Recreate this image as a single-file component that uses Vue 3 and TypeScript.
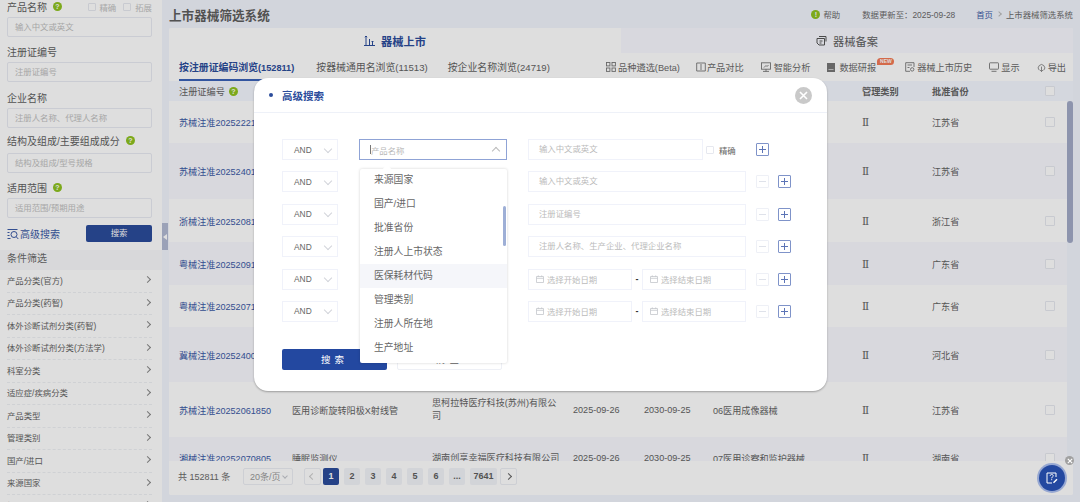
<script setup lang="ts">
interface Row {
  code: string;
  h: number;
  name?: string;
  company?: string;
  start?: string;
  end?: string;
  category?: string;
  province: string;
}

const sideFilters = [
  "产品分类(官方)",
  "产品分类(药智)",
  "体外诊断试剂分类(药智)",
  "体外诊断试剂分类(方法学)",
  "科室分类",
  "适应症/疾病分类",
  "产品类型",
  "管理类别",
  "国产/进口",
  "来源国家",
  "批准省份",
];

const rows: Row[] = [
  { code: "苏械注准20252221850", h: 42, province: "江苏省" },
  { code: "苏械注准20252401127", h: 56, province: "江苏省" },
  { code: "浙械注准20252081436", h: 43, province: "浙江省" },
  { code: "粤械注准20252091302", h: 43, province: "广东省" },
  { code: "粤械注准20252071655", h: 42, province: "广东省" },
  { code: "冀械注准20252400218", h: 55, province: "河北省" },
  {
    code: "苏械注准20252061850",
    h: 55,
    name: "医用诊断旋转阳极X射线管",
    company: "思柯拉特医疗科技(苏州)有限公司",
    start: "2025-09-26",
    end: "2030-09-25",
    category: "06医用成像器械",
    province: "江苏省",
  },
  {
    code: "湘械注准20252070805",
    h: 42,
    name: "睡眠监测仪",
    company: "湖南创享幸福医疗科技有限公司",
    start: "2025-09-26",
    end: "2030-09-25",
    category: "07医用诊察和监护器械",
    province: "湖南省",
  },
];

const options = ["来源国家", "国产/进口", "批准省份", "注册人上市状态", "医保耗材代码", "管理类别", "注册人所在地", "生产地址"];
const pages = ["2", "3", "4", "5", "6", "..."];
</script>

<template>
  <div class="page">
    <aside class="side">
      <div class="form">
        <div class="label-row">
          <span class="label">产品名称</span>
          <span class="hint">?</span>
          <span class="checks">
            <i class="box"></i>精确
            <i class="box"></i>拓展
          </span>
        </div>
        <div class="field">输入中文或英文</div>
        <div class="label-row gap1"><span class="label">注册证编号</span></div>
        <div class="field">注册证编号</div>
        <div class="label-row gap2"><span class="label">企业名称</span></div>
        <div class="field">注册人名称、代理人名称</div>
        <div class="label-row gap3">
          <span class="label">结构及组成/主要组成成分</span>
          <span class="hint">?</span>
        </div>
        <div class="field">结构及组成/型号规格</div>
        <div class="label-row gap1">
          <span class="label">适用范围</span>
          <span class="hint">?</span>
        </div>
        <div class="field">适用范围/预期用途</div>
        <div class="search-row">
          <span class="adv">
            <svg width="12" height="12" viewBox="0 0 12 12" fill="none" stroke="#3b5aa6" stroke-width="1">
              <path d="M.5 1.5h10M.5 4.5h2M.5 7.5h2M.5 10.5h3" />
              <circle cx="7" cy="6.5" r="3" />
              <path d="M9.2 8.7 11.3 11" />
            </svg>
            高级搜索
          </span>
          <span class="side-btn">搜索</span>
        </div>
      </div>
      <div class="cond-head">条件筛选</div>
      <div v-for="item in sideFilters" :key="item" class="cond">
        <span>{{ item }}</span>
        <i class="chev-right"></i>
      </div>
    </aside>

    <main class="main">
      <div class="handle"><i></i></div>
      <header class="top">
        <h1>上市器械筛选系统</h1>
        <div class="top-right">
          <span class="help"><span class="hint solid">!</span>帮助</span>
          <span class="updated">数据更新至：2025-09-28</span>
          <span class="crumbs"><b>首页</b><i class="chev-right small"></i>上市器械筛选系统</span>
        </div>
      </header>

      <section class="panel">
        <div class="tabs">
          <div class="tab active">
            <svg width="11" height="11" viewBox="0 0 11 11" fill="none" stroke="#2b4c9b" stroke-width="1">
              <path d="M0 10.5h11M2 10V1M.8 2.2 2 1l1.2 1.2M5.5 10V4M8.5 10V6M7.6 7 8.5 6l.9 1" />
            </svg>
            器械上市
          </div>
          <div class="tab">
            <svg width="11" height="11" viewBox="0 0 11 11" fill="none" stroke="#555" stroke-width="1">
              <path d="M3 1.5h7v5M1 3.5h7.5v6.5H3L1 8z" />
              <path d="M3.5 6h3M3.5 8h2" />
            </svg>
            器械备案
          </div>
        </div>

        <div class="subbar">
          <span class="sub on">按注册证编码浏览<em>(152811)</em></span>
          <span class="sub">按器械通用名浏览<em>(11513)</em></span>
          <span class="sub">按企业名称浏览<em>(24719)</em></span>
          <div class="tools">
            <span class="tool t1">
              <svg width="10" height="10" viewBox="0 0 10 10" fill="none" stroke="#777" stroke-width=".9">
                <rect x=".5" y=".5" width="3.4" height="3.4" />
                <rect x="6" y=".5" width="3.4" height="3.4" />
                <rect x=".5" y="6" width="3.4" height="3.4" />
                <rect x="6" y="6" width="3.4" height="3.4" />
              </svg>
              品种遴选(Beta)
            </span>
            <span class="tool t2">
              <svg width="10" height="10" viewBox="0 0 10 10" fill="none" stroke="#777" stroke-width=".9">
                <path d="M4 1H.7v8H4M6 1h3.300v8H6M5 0v10" />
              </svg>
              产品对比
            </span>
            <span class="tool t3">
              <svg width="10" height="10" viewBox="0 0 10 10" fill="none" stroke="#777" stroke-width=".9">
                <rect x=".5" y=".8" width="9" height="6.4" />
                <path d="M2 9.4h6M5 7.2v2.2M3 5.5l2-2 1 1 1.5-1.5" />
              </svg>
              智能分析
            </span>
            <span class="tool t4">
              <svg width="8" height="9" viewBox="0 0 8 9">
                <path fill="#777" d="M0 0h8v9H0z" />
                <path stroke="#ddd" stroke-width=".8" d="M1.500 6.500h5" />
              </svg>
              数据研报
              <b class="new">NEW</b>
            </span>
            <span class="tool t5">
              <svg width="10" height="10" viewBox="0 0 10 10" fill="none" stroke="#777" stroke-width=".9">
                <path d="M9 5V.7H.7v8.600H5M2.500 3h4.500M2.500 5.500h2" />
                <circle cx="7.200" cy="7.400" r="1.700" />
              </svg>
              器械上市历史
            </span>
            <span class="tool t6">
              <svg width="10" height="10" viewBox="0 0 10 10" fill="none" stroke="#777" stroke-width=".9">
                <rect x=".5" y=".8" width="9" height="6.4" rx=".6" />
                <path d="M2.500 9.300h5" />
              </svg>
              显示
            </span>
            <span class="tool t7">
              <svg width="9" height="9" viewBox="0 0 10 10" fill="none" stroke="#777" stroke-width=".9">
                <path d="M2.500 8A3.600 3.600 0 1 1 7.500 8" />
                <path d="M5 4v5.500M3.300 7.800 5 9.500l1.700-1.700" />
              </svg>
              导出
            </span>
          </div>
        </div>

        <div class="grid head">
          <span class="head-first">注册证编号<span class="hint">?</span></span>
          <span></span><span></span><span></span><span></span><span></span>
          <span>管理类别</span>
          <span>批准省份</span>
          <i class="box"></i>
        </div>

        <div class="body">
          <div class="rows">
            <div v-for="(row, i) in rows" :key="row.code" class="grid row" :class="{ alt: i % 2 === 1 }" :style="{ height: row.h + 'px' }">
              <a>{{ row.code }}</a>
              <span>{{ row.name }}</span>
              <span class="company">{{ row.company }}</span>
              <span>{{ row.start }}</span>
              <span>{{ row.end }}</span>
              <span>{{ row.category }}</span>
              <span class="roman">Ⅱ</span>
              <span class="prov">{{ row.province }}</span>
              <i class="box"></i>
            </div>
          </div>
          <div class="track"><div class="thumb"></div></div>
        </div>

        <footer class="pager">
          <span class="total">共 152811 条</span>
          <span class="size">20条/页<i class="chev-down"></i></span>
          <span class="pg nav dim"><i class="chev-left"></i></span>
          <span class="pg cur">1</span>
          <span v-for="p in pages" :key="p" class="pg">{{ p }}</span>
          <span class="pg wide">7641</span>
          <span class="pg nav"><i class="chev-right"></i></span>
        </footer>
      </section>
    </main>

    <div class="mask">
      <div class="modal">
        <div class="modal-head">
          <i class="dot"></i>
          <span class="modal-title">高级搜索</span>
          <span class="close">
            <svg width="9" height="9" viewBox="0 0 9 9" stroke="#fff" stroke-width="1.6"><path d="M1 1l7 7M8 1 1 8" /></svg>
          </span>
        </div>

        <div class="modal-body">
          <div class="q-row">
            <div class="q-and">AND<i class="chev-down big"></i></div>
            <div class="q-col q-focus">
              <i class="cursor"></i>产品名称
              <i class="chev-up"></i>
            </div>
            <div class="q-input narrow">输入中文或英文</div>
            <i class="box q-box"></i><span class="exact">精确</span>
            <span class="sq plus first"></span>
          </div>

          <div class="q-row">
            <div class="q-and">AND<i class="chev-down big"></i></div>
            <div class="q-col"></div>
            <div class="q-input">输入中文或英文</div>
            <span class="sq minus"></span><span class="sq plus"></span>
          </div>
          <div class="q-row">
            <div class="q-and">AND<i class="chev-down big"></i></div>
            <div class="q-col"></div>
            <div class="q-input">注册证编号</div>
            <span class="sq minus"></span><span class="sq plus"></span>
          </div>
          <div class="q-row">
            <div class="q-and">AND<i class="chev-down big"></i></div>
            <div class="q-col"></div>
            <div class="q-input">注册人名称、生产企业、代理企业名称</div>
            <span class="sq minus"></span><span class="sq plus"></span>
          </div>
          <div v-for="n in 2" :key="n" class="q-row">
            <div class="q-and">AND<i class="chev-down big"></i></div>
            <div class="q-col"></div>
            <div class="q-dates">
              <div class="q-date">
                <svg width="8" height="8" viewBox="0 0 8 8" fill="none" stroke="#c4c6cc" stroke-width=".8"><path d="M.5 1.500h7v6h-7zM.5 3.300h7M2.300 .4v1.500M5.700 .4v1.500" /></svg>
                选择开始日期
              </div>
              <span class="dash">-</span>
              <div class="q-date">
                <svg width="8" height="8" viewBox="0 0 8 8" fill="none" stroke="#c4c6cc" stroke-width=".8"><path d="M.5 1.500h7v6h-7zM.5 3.300h7M2.300 .4v1.500M5.700 .4v1.500" /></svg>
                选择结束日期
              </div>
            </div>
            <span class="sq minus"></span><span class="sq plus"></span>
          </div>

          <div class="actions">
            <span class="btn-search">搜索</span>
            <span class="btn-reset">清空</span>
          </div>

          <div class="drop">
            <i class="drop-arrow"></i>
            <div class="drop-list">
              <div v-for="(o, i) in options" :key="o" class="opt" :class="{ hover: i === 4 }">{{ o }}</div>
            </div>
            <i class="drop-thumb"></i>
          </div>
        </div>
      </div>

      <div class="float-close">
        <svg width="6" height="6" viewBox="0 0 6 6" stroke="#fff" stroke-width="1.1"><path d="M.8.8l4.400 4.400M5.200.8.8 5.200" /></svg>
      </div>
    </div>

    <div class="float">
      <svg width="12" height="12" viewBox="0 0 12 12" fill="none" stroke="#fff" stroke-width="1">
        <path d="M10 5V1H1v10h5" />
        <path d="M4.200 3.900c0-2 3-2 3 0 0 1.100-1.500 1.100-1.500 2.400M5.700 7.200v1" />
        <path d="M7.500 10.800 11 7.200" stroke-width="1.400" />
      </svg>
    </div>
  </div>
</template>

<style>
html,
body {
  margin: 0;
  overflow: hidden;
}
</style>

<style scoped>
.page {
  display: flex;
  width: 1080px;
  height: 502px;
  overflow: hidden;
  position: relative;
  background: #f2f5fd;
  color: #555;
  font-family: "Liberation Sans", "Noto Sans CJK SC", sans-serif;
}

i {
  font-style: normal;
}

.side {
  width: 162px;
  flex: none;
  background: #fff;
}

.form {
  padding: 0 10px 0 7px;
  height: 250px;
  box-sizing: border-box;
}

.label-row {
  display: flex;
  align-items: center;
  height: 13px;
  margin-bottom: 4px;
}

.gap1 {
  margin-top: 8px;
}

.gap2 {
  margin-top: 9px;
}

.gap3 {
  margin-top: 6px;
  margin-bottom: 6px;
}

.label {
  font-size: 10px;
  color: #5f5f5f;
}

.hint {
  display: inline-flex;
  align-items: center;
  justify-content: center;
  width: 9px;
  height: 9px;
  margin-left: 6px;
  border-radius: 50%;
  background: #8fc31f;
  color: #fff;
  font-size: 7px;
  font-weight: 700;
  line-height: 1;
}

.checks {
  margin-left: auto;
  display: flex;
  align-items: center;
  font-size: 8.4px;
  color: #c2c2c2;
  white-space: nowrap;
}

.box {
  display: inline-block;
  flex: none;
  width: 8px;
  height: 8px;
  box-sizing: border-box;
  border: 1px solid #e6e8ef;
  border-radius: 1px;
  background: #fff;
}

.checks .box {
  margin: 0 4px 0 0;
}

.checks .box:nth-of-type(2) {
  margin-left: 7px;
}

.field {
  height: 20px;
  line-height: 18px;
  box-sizing: border-box;
  border: 1px solid #e9ebf3;
  border-radius: 2px;
  padding-left: 7px;
  font-size: 8.4px;
  color: #c0c0c0;
}

.search-row {
  display: flex;
  justify-content: space-between;
  align-items: center;
  margin-top: 7px;
}

.adv {
  display: flex;
  align-items: center;
  gap: 1px;
  font-size: 10px;
  color: #3b5aa6;
}

.side-btn {
  width: 66px;
  height: 17px;
  line-height: 17px;
  text-align: center;
  border-radius: 2px;
  background: #2b4c9b;
  color: #fff;
  font-size: 8.4px;
}

.cond-head {
  height: 20px;
  line-height: 18px;
  padding-left: 7px;
  background: #f8f9fb;
  font-size: 10px;
  color: #6a6a6a;
}

.cond {
  display: flex;
  align-items: center;
  justify-content: space-between;
  height: 22.5px;
  padding-bottom: 2px;
  margin: 0 10px 0 7px;
  box-sizing: border-box;
  border-bottom: 1px dashed #eef0f4;
  font-size: 8.4px;
  color: #636363;
}

.chev-right,
.chev-left,
.chev-down,
.chev-up {
  display: inline-block;
  flex: none;
  width: 5px;
  height: 5px;
  box-sizing: border-box;
  border-right: 1px solid #888;
  border-bottom: 1px solid #888;
}

.chev-right {
  transform: rotate(-45deg);
  margin-right: 2px;
}

.chev-right.small {
  width: 4px;
  height: 4px;
  margin: 0 5px 1px 4px;
  border-color: #bbb;
}

.chev-left {
  transform: rotate(135deg);
}

.chev-down {
  transform: rotate(45deg);
  border-color: #c4c6cc;
}

.chev-down.big {
  width: 6px;
  height: 6px;
  border-color: #d2d4da;
  margin-left: auto;
  margin-bottom: 2px;
}

.chev-up {
  width: 6px;
  height: 6px;
  margin-left: auto;
  margin-top: 3px;
  transform: rotate(-135deg);
  border-color: #bbb;
}

.main {
  flex: 1;
  min-width: 0;
  padding: 0 7px;
  position: relative;
  display: flex;
  flex-direction: column;
}

.handle {
  position: absolute;
  left: 0;
  top: 223px;
  width: 6px;
  height: 27px;
  background: #b3bbd4;
  display: flex;
  align-items: center;
  justify-content: center;
}

.handle i {
  border-style: solid;
  border-width: 3.5px 4px 3.5px 0;
  border-color: transparent #fff transparent transparent;
}

.top {
  height: 28px;
  flex: none;
  display: flex;
  align-items: center;
  justify-content: space-between;
}

h1 {
  margin: 0;
  font-size: 12.6px;
  font-weight: 700;
  color: #5f5f5f;
}

.top-right {
  display: flex;
  align-items: center;
  font-size: 8.4px;
  color: #6a6a6a;
}

.help {
  display: flex;
  align-items: center;
}

.hint.solid {
  margin: 0 3px 0 0;
}

.updated {
  margin-left: 22px;
}

.crumbs {
  display: flex;
  align-items: center;
  margin-left: 21px;
}

.crumbs b {
  font-weight: 400;
  color: #3b5aa6;
}

.panel {
  height: 467px;
  flex: none;
  background: #fff;
  border-radius: 2px;
  display: flex;
  flex-direction: column;
  overflow: hidden;
}

.tabs {
  display: flex;
  height: 25px;
  flex: none;
  background: #f8f9ff;
}

.tab {
  width: 452px;
  display: flex;
  align-items: center;
  justify-content: center;
  gap: 6px;
  font-size: 11.2px;
  color: #5f5f5f;
}

.tab.active {
  background: #fff;
  color: #2b4c9b;
  font-weight: 700;
}

.subbar {
  height: 28px;
  flex: none;
  display: flex;
  align-items: center;
  padding-left: 10px;
  position: relative;
}

.sub {
  height: 28px;
  line-height: 29px;
  margin-right: 20px;
  font-size: 9.9px;
  color: #636363;
  box-sizing: border-box;
  white-space: nowrap;
}

.sub em {
  font-style: normal;
  font-size: 9.6px;
}

.sub.on {
  margin-right: 22px;
  color: #2b4c9b;
  font-weight: 700;
  border-bottom: 2px solid #3a62b8;
}

.sub.on em {
  font-size: 9.2px;
}

.tools {
  flex: 1;
  display: flex;
  align-items: center;
  justify-content: flex-end;
  font-size: 9.2px;
  color: #6a6a6a;
}

.tool {
  display: flex;
  align-items: center;
  gap: 2px;
  white-space: nowrap;
  position: relative;
  margin-left: 17px;
}

.tools .t2 {
  margin-left: 16px;
  gap: 1px;
}

.tools .t3 {
  gap: 3px;
}

.tools .t4 {
  gap: 4px;
}

.tools .t5 {
  margin-left: 29px;
}

.tools .t7 {
  margin-right: 7px;
}

.new {
  position: absolute;
  left: 50px;
  top: -2px;
  width: 17px;
  height: 7px;
  line-height: 7px;
  text-align: center;
  border-radius: 4px 4px 4px 0;
  background: #f47a55;
  color: #fff;
  font-size: 5px;
  font-weight: 700;
}

.grid {
  display: grid;
  grid-template-columns: 113px 140px 141px 71px 69px 149px 70px 113px 1fr;
  align-items: center;
  padding-left: 10px;
  font-size: 9.1px;
  color: #636363;
}

.head {
  height: 20px;
  flex: none;
  background: #f4f7ff;
  font-weight: 700;
  font-size: 9.2px;
}

.head .box,
.row .box {
  width: 10px;
  height: 10px;
}

.head-first {
  display: flex;
  align-items: center;
  font-weight: 400;
}

.head-first .hint {
  margin-left: 4px;
}

.body {
  flex: 1;
  min-height: 0;
  display: flex;
  overflow: hidden;
  background: #f2f5fd;
}

.rows {
  flex: 1;
  min-width: 0;
}

.row {
  background: #fff;
}

.row.alt {
  background: #f8f9fe;
}

.row a {
  color: #3b5aa6;
  white-space: nowrap;
}

.company {
  padding-right: 11px;
  line-height: 13px;
}

.roman {
  font-family: "DejaVu Serif", serif;
  font-size: 10.5px;
}

.track {
  width: 6px;
  flex: none;
}

.thumb {
  height: 142px;
  border-radius: 3px;
  background: #a3abc7;
}

.pager {
  height: 34px;
  flex: none;
  display: flex;
  align-items: center;
  padding: 0 0 3px 9px;
  box-sizing: border-box;
  background: #fff;
  font-size: 9px;
  color: #6a6a6a;
}

.total {
  width: 65px;
  flex: none;
  white-space: nowrap;
}

.size {
  width: 50px;
  height: 17px;
  box-sizing: border-box;
  border: 1px solid #eceef4;
  border-radius: 2px;
  display: flex;
  align-items: center;
  padding-left: 6px;
  margin-right: 11px;
  color: #999;
}

.size i {
  width: 4px;
  height: 4px;
  margin-left: 2px;
  margin-bottom: 2px;
}

.pg {
  width: 16px;
  height: 17px;
  line-height: 17px;
  margin-right: 5px;
  text-align: center;
  border-radius: 2px;
  background: #f2f4f9;
  font-weight: 700;
  color: #5f5f5f;
}

.pg.nav {
  width: 17px;
  box-sizing: border-box;
  border: 1px solid #eceef4;
  background: #fff;
  display: flex;
  align-items: center;
  justify-content: center;
  margin-right: 2px;
}

.pg.nav:last-child {
  margin-left: -2px;
}

.pg.nav .chev-right {
  margin: 0;
  border-color: #666;
}

.pg.nav.dim .chev-left {
  border-color: #ccc;
}

.pg.cur {
  background: #2b4c9b;
  color: #fff;
}

.pg.wide {
  width: 27px;
}

.mask {
  position: absolute;
  inset: 0;
  background: rgba(0, 0, 0, 0.13);
  display: flex;
  justify-content: center;
  align-items: flex-start;
  padding-top: 78px;
}

.modal {
  width: 573px;
  height: 313px;
  margin-left: 1px;
  background: #fff;
  border-radius: 14px;
  box-shadow: 0 1px 2px rgba(0, 0, 0, 0.3);
}

.modal-head {
  height: 34px;
  display: flex;
  align-items: center;
  padding: 0 15px;
  border-bottom: 1px solid #eef1f8;
}

.dot {
  width: 4px;
  height: 4px;
  border-radius: 50%;
  background: #2b4c9b;
  margin-right: 9px;
}

.modal-title {
  font-size: 10.5px;
  font-weight: 700;
  color: #2b4c9b;
}

.close {
  width: 17px;
  height: 17px;
  margin-left: auto;
  border-radius: 50%;
  background: #c9c9c9;
  display: flex;
  align-items: center;
  justify-content: center;
}

.modal-body {
  position: relative;
  padding: 26px 0 0 28px;
  display: flex;
  flex-direction: column;
  gap: 11.4px;
}

.q-row {
  display: flex;
  align-items: center;
  height: 21px;
}

.q-and {
  width: 56px;
  height: 21px;
  box-sizing: border-box;
  display: flex;
  align-items: center;
  padding: 0 6px 0 11px;
  border: 1px solid #f0f2fa;
  font-size: 8.4px;
  color: #666;
}

.q-col {
  width: 148px;
  height: 21px;
  margin: 0 21px;
  box-sizing: border-box;
}

.q-focus {
  display: flex;
  align-items: center;
  padding: 0 7px 0 10px;
  border: 1px solid #8fa3d6;
  font-size: 8.4px;
  color: #b9b9b9;
}

.cursor {
  width: 1px;
  height: 9px;
  background: #777;
}

.q-input {
  width: 218px;
  height: 21px;
  line-height: 19px;
  box-sizing: border-box;
  padding-left: 10px;
  border: 1px solid #f0f2fa;
  font-size: 8.4px;
  color: #bbb;
}

.q-input.narrow {
  width: 175px;
}

.q-box {
  margin-left: 3px;
}

.exact {
  margin-left: 5px;
  font-size: 8.4px;
  color: #666;
}

.q-dates {
  width: 218px;
  display: flex;
  align-items: center;
  justify-content: space-between;
}

.q-date {
  width: 104px;
  height: 21px;
  box-sizing: border-box;
  display: flex;
  align-items: center;
  gap: 3px;
  padding-left: 7px;
  border: 1px solid #f0f2fa;
  font-size: 8.4px;
  color: #bbb;
}

.dash {
  font-size: 9px;
  font-weight: 700;
  color: #333;
}

.sq {
  position: relative;
  width: 13px;
  height: 13px;
  box-sizing: border-box;
  border: 1px solid #7f93c9;
  border-radius: 1px;
  margin-left: 9px;
}

.sq.minus {
  margin-left: 10px;
  border-color: #eef0f6;
}

.sq.first {
  margin-left: 20px;
}

.sq::before {
  content: "";
  position: absolute;
  left: 2px;
  right: 2px;
  top: 5px;
  height: 1px;
  background: #5c74b6;
}

.sq.minus::before {
  background: #dfe2ea;
}

.sq.plus::after {
  content: "";
  position: absolute;
  top: 2px;
  bottom: 2px;
  left: 5px;
  width: 1px;
  background: #5c74b6;
}

.actions {
  display: flex;
  gap: 10px;
  margin-top: 15.6px;
}

.btn-search,
.btn-reset {
  width: 105px;
  height: 21px;
  line-height: 21px;
  box-sizing: border-box;
  text-align: center;
  border-radius: 2px;
  font-size: 9.5px;
  letter-spacing: 4px;
}

.btn-search {
  background: #2348a0;
  color: #fff;
}

.btn-reset {
  line-height: 19px;
  border: 1px solid #eef0f6;
  color: #666;
}

.drop {
  position: absolute;
  left: 106px;
  top: 56px;
  width: 147px;
  height: 194px;
  background: #fff;
  border-radius: 2px;
  box-shadow: 0 0 3px rgba(0, 0, 0, 0.18);
}

.drop-arrow {
  position: absolute;
  left: 24px;
  top: -3px;
  width: 6px;
  height: 6px;
  background: #fff;
  transform: rotate(45deg);
}

.drop-list {
  position: relative;
  height: 194px;
  overflow: hidden;
}

.opt {
  height: 24px;
  line-height: 24px;
  padding-left: 14px;
  font-size: 9.8px;
  color: #666;
}

.opt:first-child {
  margin-top: -1px;
}

.opt.hover {
  background: #f5f6fa;
}

.drop-thumb {
  position: absolute;
  right: 1px;
  top: 37px;
  width: 3px;
  height: 40px;
  border-radius: 2px;
  background: #9eafd6;
}

.float {
  position: absolute;
  left: 1039px;
  top: 465px;
  width: 26px;
  height: 26px;
  border-radius: 50%;
  background: #2348a0;
  box-shadow: 0 0 0 2px rgba(92, 124, 200, 0.55);
  display: flex;
  align-items: center;
  justify-content: center;
}

.float-close {
  position: absolute;
  left: 1065px;
  top: 456px;
  width: 9px;
  height: 9px;
  border-radius: 50%;
  background: #a0a0a0;
  display: flex;
  align-items: center;
  justify-content: center;
}
</style>
